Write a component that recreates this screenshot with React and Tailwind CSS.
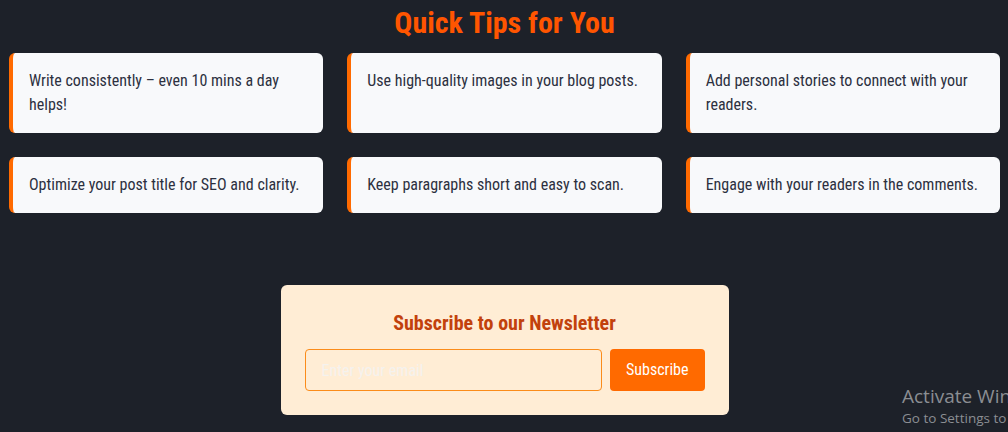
import React from 'react';

/* — datos — */
const TIPS = [
  'Write consistently – even 10 mins a day helps!',
  'Use high-quality images in your blog posts.',
  'Add personal stories to connect with your readers.',
  'Optimize your post title for SEO and clarity.',
  'Keep paragraphs short and easy to scan.',
  'Engage with your readers in the comments.',
];

const FONT = "font-['Roboto_Condensed','Liberation_Sans_Narrow','Roboto',sans-serif]";

function TipCard({ text }) {
  return (
    <div className="bg-[#f8f9fb] border-l-4 border-[#ff6a00] rounded-md p-4 text-base leading-6 text-[#2c3040]">
      {text}
    </div>
  );
}

export default function App() {
  return (
    <div className={`relative min-h-[432px] bg-[#1d2129] overflow-hidden pl-[9px] pr-2 ${FONT}`}>
      {/* CABECERA */}
      <h2 className="text-center text-3xl leading-9 font-bold text-[#ff5500] pt-[5px] mb-3">
        Quick Tips for You
      </h2>

      {/* TIPS */}
      <div className="grid grid-cols-3 gap-6">
        {TIPS.map(t => <TipCard key={t} text={t} />)}
      </div>

      {/* NEWSLETTER */}
      <div className="w-[448px] mx-auto mt-[72px] bg-[#ffedd5] rounded-md p-6">
        <h3 className="text-center text-xl leading-7 font-bold text-[#c2410c] mb-3">
          Subscribe to our Newsletter
        </h3>
        <div className="flex gap-2">
          <input
            type="email"
            placeholder="Enter your email"
            className="flex-1 h-[42px] px-4 rounded border border-[#fb8c1a] bg-transparent text-base outline-none placeholder:text-[#f5f2ee]"
          />
          <button className="h-[42px] px-4 rounded bg-[#ff6a00] text-white text-base">
            Subscribe
          </button>
        </div>
      </div>

      {/* marca de agua */}
      <div className="absolute left-[902px] top-[384px] font-['Open_Sans',sans-serif] text-[#8b8e93] whitespace-nowrap">
        <div className="text-[19px] leading-6">Activate Windows</div>
        <div className="text-[13.5px] leading-5">Go to Settings to activate Windows.</div>
      </div>
    </div>
  );
}
